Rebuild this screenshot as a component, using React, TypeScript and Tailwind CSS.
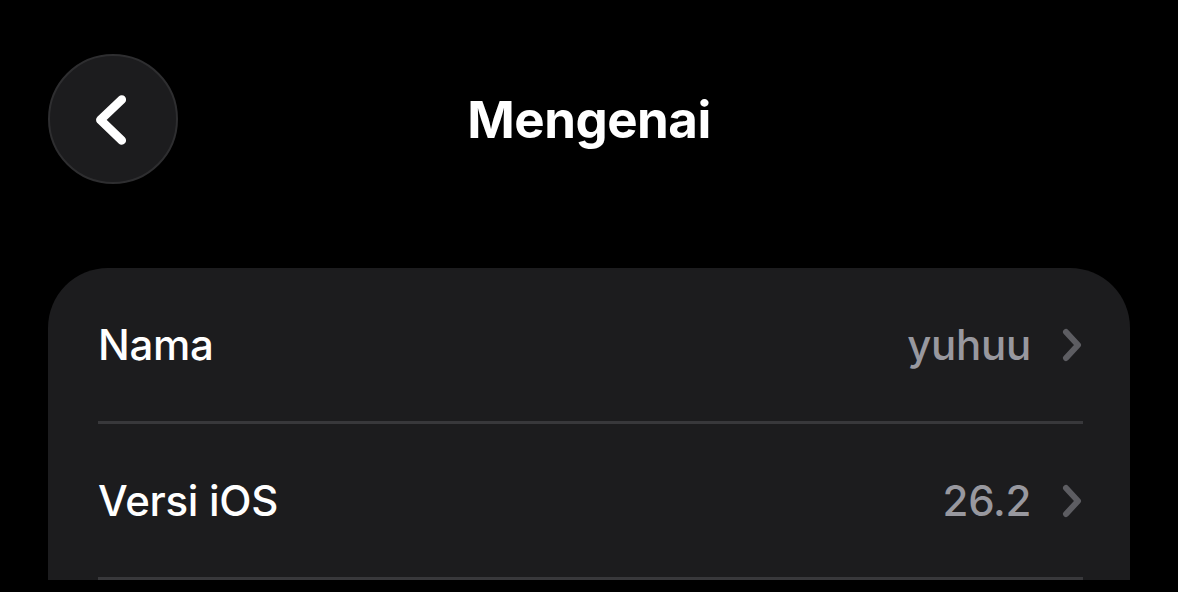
import React from "react";

const rows = [
  { label: "Nama", value: "yuhuu" },
  { label: "Versi iOS", value: "26.2" },
];

function Chevron() {
  return (
    <svg width="22" height="34" viewBox="0 0 22 34" className="shrink-0">
      <path d="M5 4 L17 17 L5 30" fill="none" stroke="#5d5d62" strokeWidth="6" strokeLinecap="round" strokeLinejoin="round" />
    </svg>
  );
}

export default function App() {
  return (
    <div className="w-[1178px] h-[592px] overflow-hidden bg-black text-white" style={{ fontFamily: "Inter, 'Noto Sans', sans-serif" }}>
      <div className="relative flex items-center justify-center h-[130px] mt-[54px] px-[48px]">
        <button className="absolute left-[48px] top-0 w-[130px] h-[130px] rounded-full bg-[#1c1c1e] border-2 border-[#2e2e30] flex items-center justify-center">
          <svg width="130" height="130" viewBox="0 0 130 130">
            <path d="M74 45 L52 66 L74 87" fill="none" stroke="#ffffff" strokeWidth="9" strokeLinecap="round" strokeLinejoin="round" />
          </svg>
        </button>
        <h1 className="text-[51px] font-bold tracking-[-0.5px] leading-none">Mengenai</h1>
      </div>

      <div className="mx-[48px] mt-[84px] bg-[#1c1c1e] rounded-t-[60px] pl-[50px] pr-[47px]">
        {rows.map((r) => (
          <div key={r.label} className="h-[156px] flex items-center border-b-[3px] border-[#38383b]">
            <span className="text-[42px] font-medium tracking-[-0.3px] flex-1">{r.label}</span>
            <span className="text-[42px] font-medium tracking-[-0.3px] text-[#98989f] mr-[30px]">{r.value}</span>
            <Chevron />
          </div>
        ))}
      </div>
    </div>
  );
}
